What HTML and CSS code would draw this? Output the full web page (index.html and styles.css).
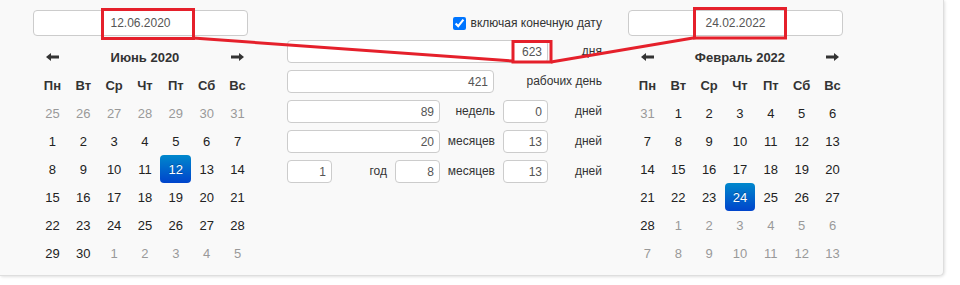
FILE: index.html
```html
<!DOCTYPE html>
<html lang="ru">
<head>
    <meta charset="UTF-8">
    <title>Калькулятор дней</title>
    <link rel="stylesheet" href="styles.css">
</head>
<body>
    <div class="panel">
        <div class="date-col">
            <input class="date-input" type="text" value="12.06.2020">
            <div class="datepicker">
                <table>
                    <thead>
                        <tr>
                            <th class="nav"><svg width="13" height="8" viewBox="0 0 13 8"><path d="M0 4 L5 0 L5 2.5 L13 2.5 L13 5.5 L5 5.5 L5 8 Z" fill="#333"/></svg></th>
                            <th class="switch" colspan="5">Июнь 2020</th>
                            <th class="nav"><svg width="13" height="8" viewBox="0 0 13 8"><path d="M13 4 L8 0 L8 2.5 L0 2.5 L0 5.5 L8 5.5 L8 8 Z" fill="#333"/></svg></th>
                        </tr>
                        <tr class="dow">
                            <th>Пн</th><th>Вт</th><th>Ср</th><th>Чт</th><th>Пт</th><th>Сб</th><th>Вс</th>
                        </tr>
                    </thead>
                    <tbody>
                        <tr><td class="old">25</td><td class="old">26</td><td class="old">27</td><td class="old">28</td><td class="old">29</td><td class="old">30</td><td class="old">31</td></tr>
                        <tr><td>1</td><td>2</td><td>3</td><td>4</td><td>5</td><td>6</td><td>7</td></tr>
                        <tr><td>8</td><td>9</td><td>10</td><td>11</td><td class="active">12</td><td>13</td><td>14</td></tr>
                        <tr><td>15</td><td>16</td><td>17</td><td>18</td><td>19</td><td>20</td><td>21</td></tr>
                        <tr><td>22</td><td>23</td><td>24</td><td>25</td><td>26</td><td>27</td><td>28</td></tr>
                        <tr><td>29</td><td>30</td><td class="new">1</td><td class="new">2</td><td class="new">3</td><td class="new">4</td><td class="new">5</td></tr>
                    </tbody>
                </table>
            </div>
        </div>

        <div class="result-col">
            <label class="include-end">
                <input type="checkbox" checked>
                включая конечную дату
            </label>
            <div class="result-grid">
                <input class="num span-5" type="text" value="623">
                <span class="unit last">дня</span>

                <input class="num span-4 workdays" type="text" value="421">
                <span class="unit last span-2">рабочих день</span>

                <input class="num span-3" type="text" value="89">
                <span class="unit">недель</span>
                <input class="num" type="text" value="0">
                <span class="unit last">дней</span>

                <input class="num span-3" type="text" value="20">
                <span class="unit">месяцев</span>
                <input class="num" type="text" value="13">
                <span class="unit last">дней</span>

                <input class="num" type="text" value="1">
                <span class="unit">год</span>
                <input class="num" type="text" value="8">
                <span class="unit">месяцев</span>
                <input class="num" type="text" value="13">
                <span class="unit last">дней</span>
            </div>
        </div>

        <div class="date-col">
            <input class="date-input" type="text" value="24.02.2022">
            <div class="datepicker">
                <table>
                    <thead>
                        <tr>
                            <th class="nav"><svg width="13" height="8" viewBox="0 0 13 8"><path d="M0 4 L5 0 L5 2.5 L13 2.5 L13 5.5 L5 5.5 L5 8 Z" fill="#333"/></svg></th>
                            <th class="switch" colspan="5">Февраль 2022</th>
                            <th class="nav"><svg width="13" height="8" viewBox="0 0 13 8"><path d="M13 4 L8 0 L8 2.5 L0 2.5 L0 5.5 L8 5.5 L8 8 Z" fill="#333"/></svg></th>
                        </tr>
                        <tr class="dow">
                            <th>Пн</th><th>Вт</th><th>Ср</th><th>Чт</th><th>Пт</th><th>Сб</th><th>Вс</th>
                        </tr>
                    </thead>
                    <tbody>
                        <tr><td class="old">31</td><td>1</td><td>2</td><td>3</td><td>4</td><td>5</td><td>6</td></tr>
                        <tr><td>7</td><td>8</td><td>9</td><td>10</td><td>11</td><td>12</td><td>13</td></tr>
                        <tr><td>14</td><td>15</td><td>16</td><td>17</td><td>18</td><td>19</td><td>20</td></tr>
                        <tr><td>21</td><td>22</td><td>23</td><td class="active">24</td><td>25</td><td>26</td><td>27</td></tr>
                        <tr><td>28</td><td class="new">1</td><td class="new">2</td><td class="new">3</td><td class="new">4</td><td class="new">5</td><td class="new">6</td></tr>
                        <tr><td class="new">7</td><td class="new">8</td><td class="new">9</td><td class="new">10</td><td class="new">11</td><td class="new">12</td><td class="new">13</td></tr>
                    </tbody>
                </table>
            </div>
        </div>
    </div>

    <!-- red annotation marks drawn over the screenshot -->
    <svg class="marks" width="960" height="285" viewBox="0 0 960 285">
        <g fill="none" stroke="#e5202b" stroke-width="3">
            <rect x="102.5" y="9.5" width="91" height="29"/>
            <rect x="513" y="41.5" width="38" height="20.5"/>
            <rect x="694.5" y="8.5" width="91" height="29.5"/>
            <path d="M193 38 L513 61"/>
            <path d="M551 62 L696 37.5"/>
        </g>
    </svg>
</body>
</html>
```

FILE: styles.css
```css
body {
    margin: 0;
    background: #fff;
    font-family: "Liberation Sans", Arial, sans-serif;
    font-size: 12px;
    color: #333;
    height: 285px;
    overflow: hidden;
}

.panel {
    display: flex;
    align-items: flex-start;
    width: 944px;
    box-sizing: border-box;
    padding: 10px 0 4px 33px;
    background: #f9f9f9;
    border-right: 1px solid #dedede;
    border-bottom: 1px solid #dedede;
    border-bottom-right-radius: 5px;
    box-shadow: 1px 1px 3px rgba(0, 0, 0, 0.12);
}

.date-col {
    width: 224px;
}

.date-input {
    display: block;
    width: 215px;
    height: 26px;
    box-sizing: border-box;
    border: 1px solid #ccc;
    border-radius: 4px;
    background: #fff;
    font-family: inherit;
    font-size: 12px;
    color: #555;
    text-align: center;
    padding: 0;
}

.datepicker {
    margin-top: 3px;
    padding: 4px;
}

.datepicker table {
    width: 216px;
    border-collapse: collapse;
    table-layout: fixed;
}

.datepicker th,
.datepicker td {
    height: 28px;
    padding: 0;
    text-align: center;
    font-size: 13px;
}

.datepicker td {
    color: #222;
}

.datepicker th.switch {
    font-weight: bold;
    color: #333;
}

.datepicker th.nav svg {
    display: block;
    margin: 0 auto;
}

.datepicker .dow th {
    font-weight: bold;
    color: #333;
}

.datepicker td.old,
.datepicker td.new {
    color: #999;
}

.datepicker td.active {
    color: #fff;
    background: linear-gradient(to bottom, #0088cc, #0044cc);
    border-radius: 4px;
    text-shadow: 0 -1px 0 rgba(0, 0, 0, 0.25);
}

.result-col {
    width: 315px;
    margin: 0 26px 0 30px;
}

.include-end {
    display: flex;
    align-items: center;
    justify-content: flex-end;
    height: 26px;
    color: #333;
}

.include-end input {
    width: 13px;
    height: 13px;
    margin: 0 5px 0 0;
}

.result-grid {
    display: grid;
    grid-template-columns: 45px 63px 45px 63px 45px 54px;
    grid-auto-rows: 23px;
    row-gap: 7px;
    margin-top: 4px;
}

.num {
    box-sizing: border-box;
    height: 23px;
    border: 1px solid #ccc;
    border-radius: 4px;
    background: #fff;
    font-family: inherit;
    font-size: 12px;
    color: #555;
    text-align: right;
    padding: 0 5px 0 0;
    min-width: 0;
}

.span-2 { grid-column: span 2; }
.span-3 { grid-column: span 3; }
.span-4 { grid-column: span 4; }
.span-5 { grid-column: span 5; }

.num.workdays {
    width: 207px;
}

.unit {
    line-height: 23px;
    text-align: right;
    padding-right: 8px;
    color: #333;
    white-space: nowrap;
}

.unit.last {
    padding-right: 0;
}

.marks {
    position: absolute;
    top: 0;
    left: 0;
    pointer-events: none;
}
```
